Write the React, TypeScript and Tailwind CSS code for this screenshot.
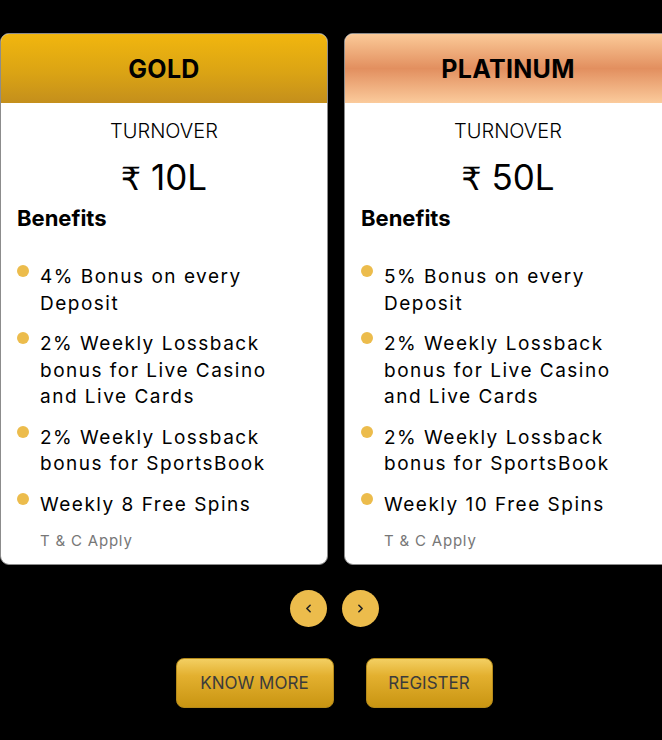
import { ChevronLeft, ChevronRight } from "lucide-react";

interface Plan {
  name: string;
  amount: string;
  headerClass: string;
  benefits: string[];
}

const plans: Plan[] = [
  {
    name: "GOLD",
    amount: "10L",
    headerClass: "bg-[linear-gradient(180deg,#f1b60e_0%,#dba414_55%,#c48f1c_100%)]",
    benefits: [
      "4% Bonus on every Deposit",
      "2% Weekly Lossback bonus for Live Casino and Live Cards",
      "2% Weekly Lossback bonus for SportsBook",
      "Weekly 8 Free Spins",
    ],
  },
  {
    name: "PLATINUM",
    amount: "50L",
    headerClass: "bg-[linear-gradient(180deg,#fbca98_0%,#e28f5f_50%,#fbcb9c_100%)]",
    benefits: [
      "5% Bonus on every Deposit",
      "2% Weekly Lossback bonus for Live Casino and Live Cards",
      "2% Weekly Lossback bonus for SportsBook",
      "Weekly 10 Free Spins",
    ],
  },
];

function PlanCard({ plan }: { plan: Plan }) {
  return (
    <div className="w-[328px] shrink-0 overflow-hidden rounded-[9px] border border-[#8c8c8c] bg-white">
      <div className={`flex h-[69px] items-center justify-center pt-[3px] ${plan.headerClass}`}>
        <h3 className="text-[25px] font-bold tracking-[0.3px] text-black">{plan.name}</h3>
      </div>
      <div className="px-4 pb-[13px] pt-[14px]">
        <p className="text-center text-[20px] leading-[28px] font-light text-black">TURNOVER</p>
        <p className="mt-[12px] text-center text-[35px] leading-[40px] font-normal text-black">
          <span className="font-['DejaVu_Sans',sans-serif] text-[32px]">₹</span> {plan.amount}
        </p>
        <h4 className="mt-[4px] text-[22px] leading-[30px] font-bold text-black">Benefits</h4>
        <ul className="mt-[31px] flex flex-col gap-[14px]">
          {plan.benefits.map((b) => (
            <li key={b} className="flex items-start">
              <span className="mt-[1px] h-[12px] w-[12px] shrink-0 rounded-full bg-[#ecbc4c]" />
              <span className="ml-[11px] pr-[28px] text-[19px] leading-[26.5px] tracking-[1.5px] text-black">
                {b}
              </span>
            </li>
          ))}
        </ul>
        <p className="mt-[13px] pl-[23px] text-[15px] leading-[20px] tracking-[0.8px] text-[#777777]">
          T &amp; C Apply
        </p>
      </div>
    </div>
  );
}

export default function App() {
  return (
    <div className="min-h-[740px] w-full overflow-hidden bg-black font-['Inter',sans-serif]">
      <div className="flex gap-[16px] pt-[33px]">
        {plans.map((p) => (
          <PlanCard key={p.name} plan={p} />
        ))}
      </div>
      <div className="mt-[25px] flex justify-center gap-[15px] pl-[6px]">
        <button className="flex h-[37px] w-[37px] items-center justify-center rounded-full bg-[#ecbc4c] text-[#222]">
          <ChevronLeft size={13} strokeWidth={3} />
        </button>
        <button className="flex h-[37px] w-[37px] items-center justify-center rounded-full bg-[#ecbc4c] text-[#222]">
          <ChevronRight size={13} strokeWidth={3} />
        </button>
      </div>
      <div className="mt-[31px] flex justify-center gap-[32px] pl-[6px]">
        <button className="h-[50px] w-[158px] rounded-[8px] border border-[#b58a1a] bg-[linear-gradient(180deg,#f3cf62_0%,#e3b02f_35%,#c99512_100%)] pt-[2px] text-[17px] text-[#3b3b3b]">
          KNOW MORE
        </button>
        <button className="h-[50px] w-[127px] rounded-[8px] border border-[#b58a1a] bg-[linear-gradient(180deg,#f3cf62_0%,#e3b02f_35%,#c99512_100%)] pt-[2px] text-[17px] text-[#3b3b3b]">
          REGISTER
        </button>
      </div>
    </div>
  );
}
